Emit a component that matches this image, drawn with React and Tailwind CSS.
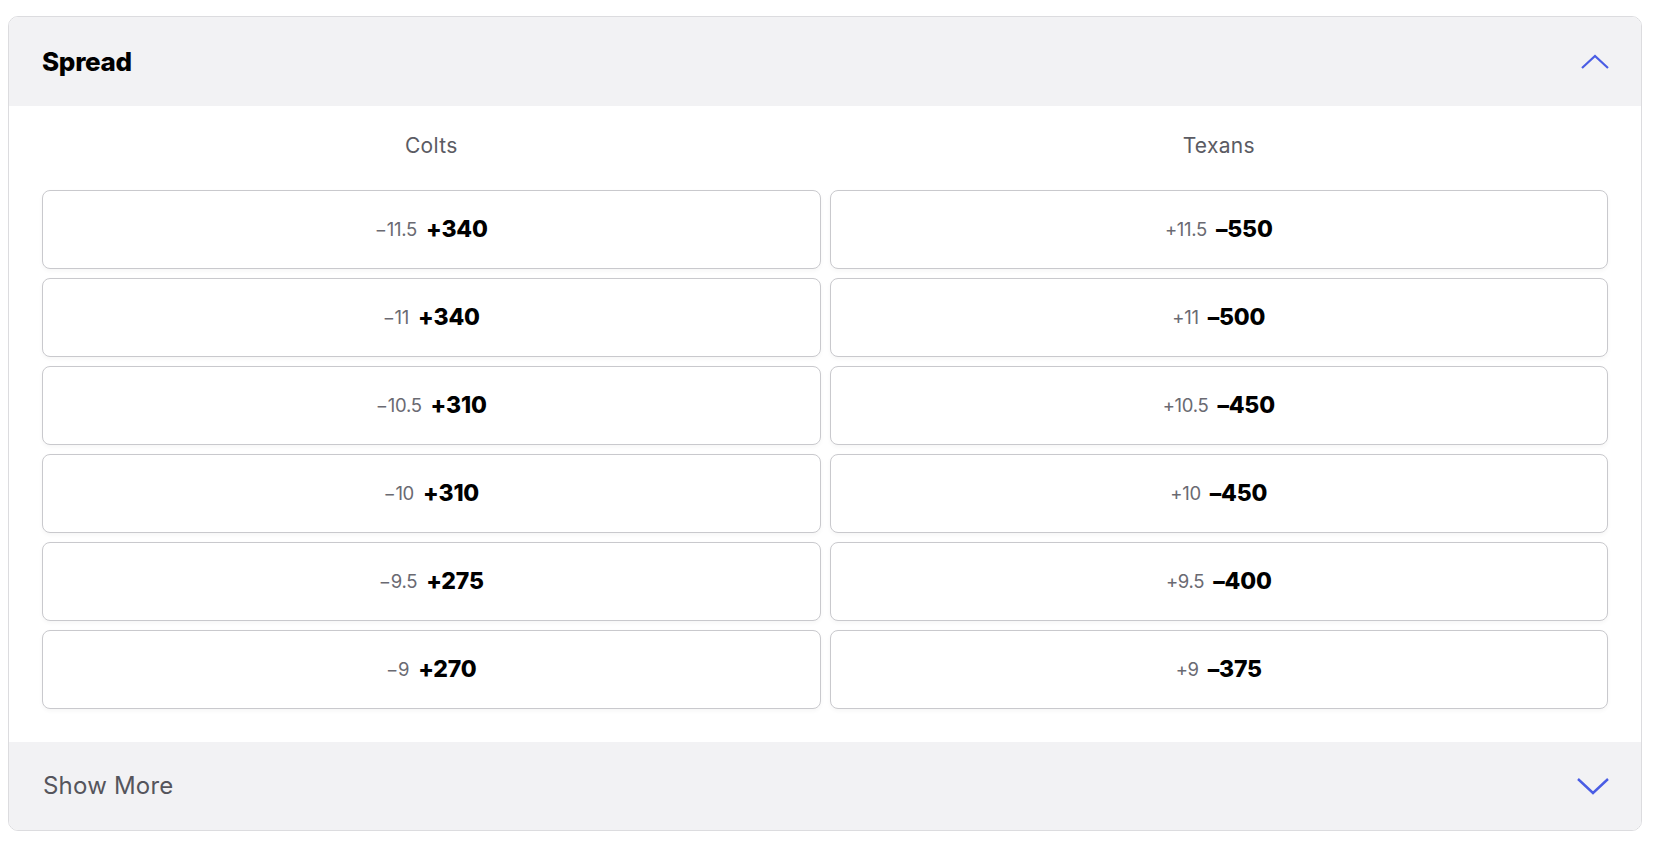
import React from "react";

const rows = [
  [["-11.5", "+340"], ["+11.5", "-550"]],
  [["-11", "+340"], ["+11", "-500"]],
  [["-10.5", "+310"], ["+10.5", "-450"]],
  [["-10", "+310"], ["+10", "-450"]],
  [["-9.5", "+275"], ["+9.5", "-400"]],
  [["-9", "+270"], ["+9", "-375"]],
];

const sans = { fontFamily: "Inter, 'Noto Sans', sans-serif" };

function Chevron({ up }) {
  return up ? (
    <svg width="32" height="18" viewBox="0 0 32 18" fill="none" stroke="#4a5de4" strokeWidth="2.2">
      <path d="M3 15 L16 3 L29 15" />
    </svg>
  ) : (
    <svg width="36" height="20" viewBox="0 0 36 20" fill="none" stroke="#4a5de4" strokeWidth="2.4">
      <path d="M3 3 L18 17 L33 3" />
    </svg>
  );
}

function OddsCell({ line, price }) {
  return (
    <button className="flex h-[79px] items-center justify-center gap-[9px] rounded-[8px] border border-[#c9c9cd] bg-white shadow-[0_2px_4px_rgba(0,0,0,0.04)]">
      <span className="text-[18.5px] tracking-[-0.3px] text-[#6a6a72]">{line.replace("-", "−")}</span>
      <span className="text-[23px] font-extrabold tracking-[-0.2px] text-black">{price.replace("-", "–")}</span>
    </button>
  );
}

export default function App() {
  return (
    <div className="min-h-screen bg-white pl-[8px] pr-[12px] pt-[16px]" style={sans}>
      <div className="overflow-hidden rounded-[10px] border border-[#dcdcdf] bg-white">
        <div className="flex h-[89px] items-center justify-between bg-[#f2f2f4] pl-[33px] pr-[30px]">
          <h2 className="text-[26px] font-extrabold tracking-[-0.3px] text-black">Spread</h2>
          <Chevron up />
        </div>
        <div className="px-[33px] pb-[33px]">
          <div className="grid h-[84px] grid-cols-2 items-center gap-x-[9px] pb-[4px] text-center text-[21px] tracking-[0.3px] text-[#5b5b63]">
            <div>Colts</div>
            <div>Texans</div>
          </div>
          <div className="grid grid-cols-2 gap-x-[9px] gap-y-[9px]">
            {rows.map((r, i) => (
              <React.Fragment key={i}>
                <OddsCell line={r[0][0]} price={r[0][1]} />
                <OddsCell line={r[1][0]} price={r[1][1]} />
              </React.Fragment>
            ))}
          </div>
        </div>
        <div className="flex h-[88px] items-center justify-between bg-[#f2f2f4] pl-[34px] pr-[30px]">
          <span className="text-[24px] tracking-[0.2px] text-[#55555c]">Show More</span>
          <Chevron />
        </div>
      </div>
    </div>
  );
}
